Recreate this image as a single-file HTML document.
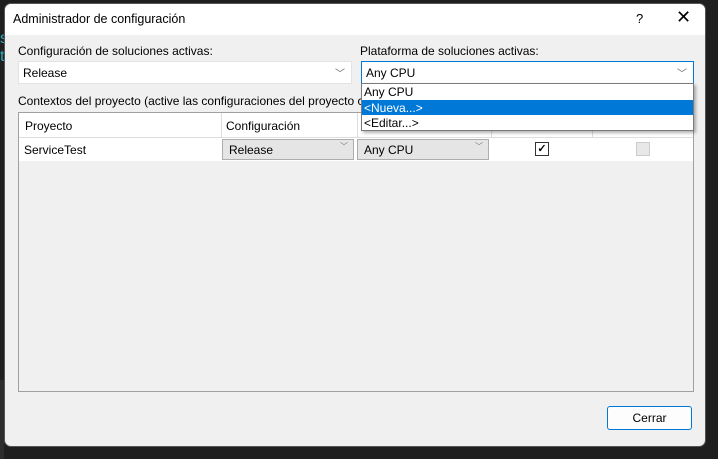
<!DOCTYPE html><html><head><style>
body{margin:0;width:718px;height:459px;background:#1f1f1f;font-family:"Liberation Sans",sans-serif;font-size:12px;color:#000;position:relative;overflow:hidden}
.a{position:absolute}
</style></head><body>
<div class="a" style="left:0;top:380px;width:4px;height:79px;background:#2d2d2d"></div>
<div class="a" style="left:0;top:30px;color:#3ab;font-size:16px">s<br>t</div>
<div class="a" style="left:4px;top:3px;width:700px;height:442px;background:#f0f0f0;border-radius:7px;overflow:hidden;border:1px solid #555">
 <div class="a" style="left:0;top:0;width:700px;height:31px;background:#fff"></div>
 <div class="a" style="left:8px;top:8px;font-size:12.5px">Administrador de configuración</div>
 <div class="a" style="left:631px;top:7px;font-size:13px">?</div>
 <div class="a" style="left:671px;top:3px;font-size:18px;font-weight:300">✕</div>
 <div class="a" style="left:13px;top:40px">Configuración de soluciones activas:</div>
 <div class="a" style="left:13px;top:57px;width:332px;height:21px;background:#fff;border:1px solid #e3e3e3"><span class="a" style="left:4px;top:4px">Release</span><span class="a" style="right:6px;top:3px;color:#666;font-size:10px">﹀</span></div>
 <div class="a" style="left:355px;top:40px">Plataforma de soluciones activas:</div>
 <div class="a" style="left:356px;top:57px;width:331px;height:21px;background:#fff;border:1px solid #0078d7"><span class="a" style="left:4px;top:4px">Any CPU</span><span class="a" style="right:6px;top:3px;color:#666;font-size:10px">﹀</span></div>
 <div class="a" style="left:13px;top:90px">Contextos del proyecto (active las configuraciones del proyecto c</div>
 <div class="a" style="left:13px;top:108px;width:674px;height:278px;border:1px solid #a0a0a0;background:#f0f0f0">
  <div class="a" style="left:0;top:0;width:674px;height:24px;background:#fff;border-bottom:1px solid #ddd"></div>
  <div class="a" style="left:0;top:25px;width:674px;height:23px;background:#fff"></div>
  <div class="a" style="left:202px;top:0;width:1px;height:24px;background:#ddd"></div>
  <div class="a" style="left:338px;top:0;width:1px;height:24px;background:#ddd"></div>
  <div class="a" style="left:472px;top:0;width:1px;height:24px;background:#ddd"></div>
  <div class="a" style="left:573px;top:0;width:1px;height:24px;background:#ddd"></div>
  <div class="a" style="left:6px;top:6px">Proyecto</div>
  <div class="a" style="left:207px;top:6px">Configuración</div>
  <div class="a" style="left:5px;top:30px">ServiceTest</div>
  <div class="a" style="left:203px;top:26px;width:130px;height:19px;background:#e5e5e5;border:1px solid #adadad"><span class="a" style="left:6px;top:3px">Release</span><span class="a" style="right:5px;top:1px;font-size:8px;color:#777">﹀</span></div>
  <div class="a" style="left:338px;top:26px;width:130px;height:19px;background:#e5e5e5;border:1px solid #adadad"><span class="a" style="left:6px;top:3px">Any CPU</span><span class="a" style="right:5px;top:1px;font-size:8px;color:#777">﹀</span></div>
  <div class="a" style="left:516px;top:29px;width:12px;height:12px;border:1px solid #333;background:#fff;font-size:11px;line-height:12px;text-align:center;font-weight:bold">✓</div>
  <div class="a" style="left:617px;top:29px;width:12px;height:12px;border:1px solid #ccc;background:#e8e8e8"></div>
 </div>
 <div class="a" style="left:356px;top:79px;width:331px;height:46px;background:#fff;border:1px solid #7a7a7a;box-shadow:2px 2px 3px rgba(0,0,0,.3)">
  <div class="a" style="left:2px;top:1px">Any CPU</div>
  <div class="a" style="left:0;top:16px;width:331px;height:15px;background:#0078d7;color:#fff"><span style="position:absolute;left:2px;top:1px">&lt;Nueva...&gt;</span></div>
  <div class="a" style="left:2px;top:32px">&lt;Editar...&gt;</div>
 </div>
 <div class="a" style="left:602px;top:402px;width:83px;height:22px;background:#fdfdfd;border:1px solid #0078d7;border-radius:3px;text-align:center;line-height:22px">Cerrar</div>
</div>
</body></html>
